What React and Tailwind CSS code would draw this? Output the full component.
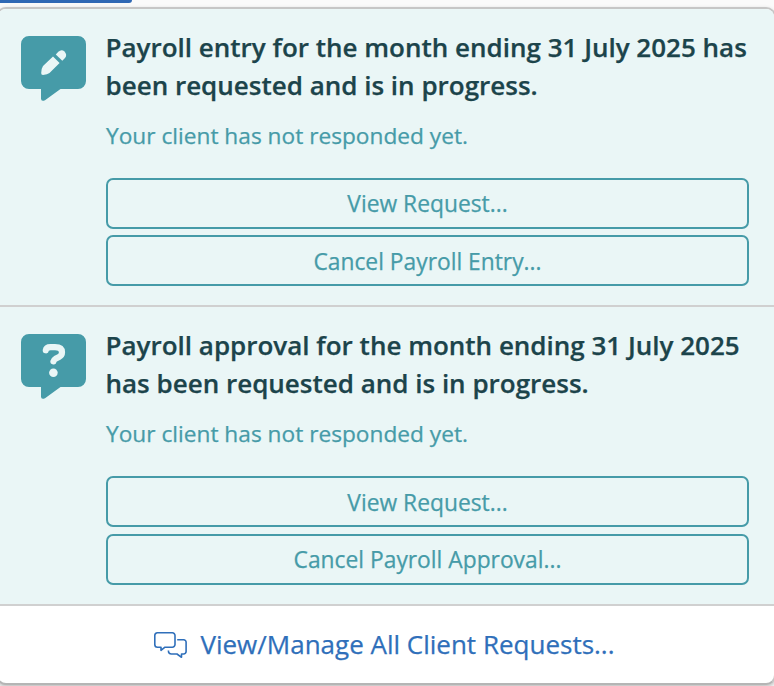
import React from 'react';

const requests = [
  {
    id: 'entry',
    icon: 'pencil',
    title: ['Payroll entry for the month ending 31 July 2025 has', 'been requested and is in progress.'],
    cancelLabel: 'Cancel Payroll Entry...',
    sectionClass: 'h-[298px]',
    gapClass: 'gap-[6px]',
  },
  {
    id: 'approval',
    icon: 'question',
    title: ['Payroll approval for the month ending 31 July 2025', 'has been requested and is in progress.'],
    cancelLabel: 'Cancel Payroll Approval...',
    sectionClass: 'h-[299px]',
    gapClass: 'gap-[7px]',
  },
];

function BubbleIcon({ type }) {
  return (
    <svg width="65" height="65" viewBox="0 0 65 65" className="mt-[27px] shrink-0" aria-hidden="true">
      <path
        d="M8 0H57a8 8 0 0 1 8 8V45a8 8 0 0 1-8 8H39.5L24 64.3Q20 66 20 62.500V53H8a8 8 0 0 1-8-8V8a8 8 0 0 1 8-8Z"
        fill="#469ba8"
      />
      {type === 'pencil' ? (
        <g fill="#eaf6f6">
          <path d="M32 20.500L38.600 27.100L28.500 37Q26.500 38.400 22 38.900Q20 38.900 20.200 37Q20.500 32 22 30Z" />
          <path d="M34.800 18.500L37.300 15.800Q40.500 12.800 43.500 15.500Q46.500 18.800 44 22L41.300 24.700Z" />
        </g>
      ) : (
        <>
          <path
            d="M24.800 16.300Q25.300 13.200 29.500 13.200H34Q41 13.200 41 18.300Q41 21.500 38 23L34.500 24.800Q32.500 26 32.400 27.300"
            fill="none"
            stroke="#eaf6f6"
            strokeWidth="6.200"
            strokeLinecap="round"
            strokeLinejoin="round"
          />
          <circle cx="32.400" cy="38.800" r="4.300" fill="#eaf6f6" />
        </>
      )}
    </svg>
  );
}

function ChatIcon() {
  return (
    <svg width="34" height="28" viewBox="0 0 34 28" fill="none" stroke="#2f6fba" strokeWidth="1.600" strokeLinejoin="round" aria-hidden="true">
      <path d="M3.500 1.800H18.300A2.700 2.700 0 0 1 21 4.500V13.500A2.700 2.700 0 0 1 18.300 16.200H11L7 19.300V16.200H3.500A2.700 2.700 0 0 1 .8 13.500V4.500A2.700 2.700 0 0 1 3.500 1.800Z" />
      <path d="M23.200 8.800H29.700A2.400 2.400 0 0 1 32.100 11.200V20.600A2.400 2.400 0 0 1 29.700 23H27.500V26.300L23 23H17.500Q14.400 23 14.400 19.500" />
    </svg>
  );
}

function RequestButton({ children, className = '' }) {
  return (
    <button
      type="button"
      className={`flex h-[51px] w-full items-center justify-center rounded-[7px] border-2 border-[#469ba8] text-[22.8px] text-[#469ba8] [-webkit-text-stroke:0.25px_#469ba8] ${className}`}
    >
      {children}
    </button>
  );
}

function RequestItem({ request }) {
  return (
    <section className={`flex border-b-2 border-[#d0d0d0] bg-[#eaf6f6] pr-[25px] pl-[21px] ${request.sectionClass}`}>
      <BubbleIcon type={request.icon} />
      <div className="ml-5 flex-1 pt-[19px]">
        <h2 className="-ml-[0.5px] text-[26px] leading-[38px] font-semibold whitespace-nowrap text-[#1c444b] [-webkit-text-stroke:0.25px_#1c444b]">
          {request.title[0]}
          <br />
          {request.title[1]}
        </h2>
        <p className="mt-[15px] text-[22.7px] leading-[34px] text-[#469ba8] [-webkit-text-stroke:0.25px_#469ba8]">
          Your client has not responded yet.
        </p>
        <div className={`mt-[25px] flex flex-col ${request.gapClass}`}>
          <RequestButton className={request.id === 'entry' ? 'pt-px' : 'pt-[3px]'}>View Request...</RequestButton>
          <RequestButton className={request.id === 'entry' ? 'pt-[3px]' : 'pt-px'}>{request.cancelLabel}</RequestButton>
        </div>
      </div>
    </section>
  );
}

export default function App() {
  return (
    <div className="h-[686px] w-[774px] overflow-hidden bg-[#fafafa] font-['Open_Sans',sans-serif]">
      <div className="h-[7px]">
        <div className="h-[3px] w-[132px] rounded-br-[6px] bg-[#2f68b4]" />
      </div>
      <div className="-ml-[4px] h-[678px] w-[780px] overflow-hidden rounded-[10px] border-2 border-[#c6c6c6] border-b-[#b5b5b5] bg-white pl-[2px] shadow-[0_2px_4px_rgba(0,0,0,0.25)]">
        <div className="w-[774px]">
          {requests.map((request) => (
            <RequestItem key={request.id} request={request} />
          ))}
          <a
            href="#"
            className="flex h-[77px] items-center justify-center gap-3 pr-[5px] text-[26px] text-[#2f6fba] [-webkit-text-stroke:0.25px_#2f6fba]"
          >
            <ChatIcon />
            View/Manage All Client Requests...
          </a>
        </div>
      </div>
    </div>
  );
}
